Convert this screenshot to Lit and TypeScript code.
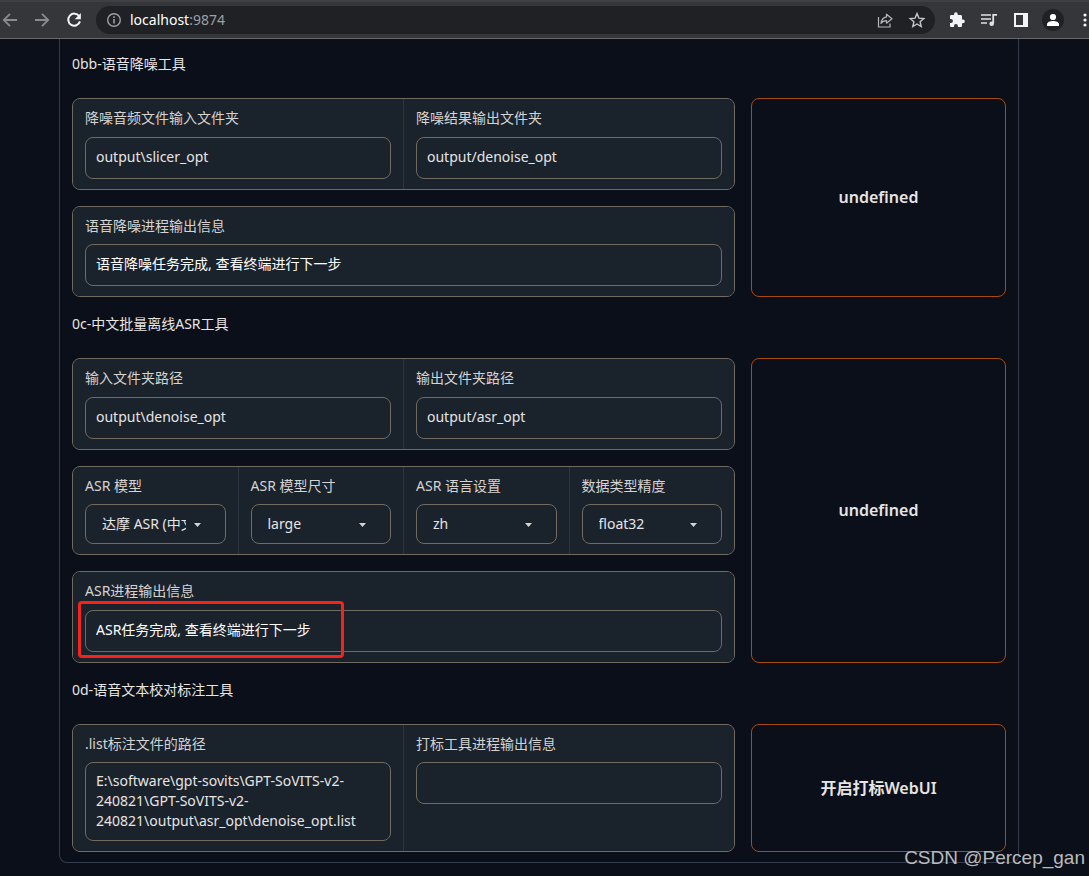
import { LitElement, html, css, svg, nothing } from "lit";
import { customElement, property } from "lit/decorators.js";

const icon = (body: unknown, size = 18) => html`<svg
  width=${size} height=${size} viewBox="0 0 18 18" fill="none" aria-hidden="true">${body}</svg>`;

const icons = {
  back: svg`<path d="M16 9H3M9 2.8 2.8 9 9 15.2" stroke="#8a8b8e" stroke-width="1.8"/>`,
  forward: svg`<path d="M2 9h13M9 2.8 15.2 9 9 15.2" stroke="#8a8b8e" stroke-width="1.8"/>`,
  reload: svg`<path d="M14.2 5.2A6 6 0 1 0 15 10.4" stroke="#f1f3f4" stroke-width="2"/><path d="M15.9 2v6.2H9.7z" fill="#f1f3f4"/>`,
  info: svg`<circle cx="9" cy="9" r="6.3" stroke="#9aa0a6" stroke-width="1.4"/><path d="M9 8v4.4M9 5.2v1.7" stroke="#9aa0a6" stroke-width="1.6"/>`,
  share: svg`<path d="M2.5 6v10h11.500v-3.500" stroke="#b4b6b9" stroke-width="1.200"/><path d="M10.500 3.200 16 7.800l-5.500 4.400V9.700C8 9.700 6.300 10.500 5 12.500c.4-3.600 2-6 5.500-6.600z" stroke="#b4b6b9" stroke-width="1.200" stroke-linejoin="round"/>`,
  star: svg`<path d="m9 2.600 1.900 4.500 4.900.4-3.700 3.200 1.100 4.800L9 13l-4.200 2.500 1.100-4.800-3.700-3.200 4.900-.4z" stroke="#c4c6c9" stroke-width="1.400"/>`,
  puzzle: svg`<path d="M15 8.600h-1V5.400c0-.8-.6-1.400-1.400-1.400H9.700V3a1.800 1.800 0 0 0-3.600 0v1H3.300C2.500 4 2 4.600 2 5.400v2.700h1a1.950 1.950 0 0 1 0 3.900H2v2.700c0 .8.500 1.300 1.300 1.300H6v-1a1.950 1.950 0 0 1 3.900 0v1h2.700c.8 0 1.400-.5 1.400-1.300v-2.500h1a1.800 1.800 0 0 0 0-3.600z" fill="#f1f3f4"/>`,
  music: svg`<path d="M1 4h10M1 8h10M1 12h6" stroke="#dfe1e3" stroke-width="1.700"/><path d="M13.200 12.500V3.900h3.800" stroke="#dfe1e3" stroke-width="1.800"/><circle cx="11.700" cy="12.700" r="2.300" fill="#dfe1e3"/>`,
  panel: svg`<path fill-rule="evenodd" d="M2 2h14v14H2zM4 4v10h7V4z" fill="#f1f3f4"/>`,
  person: svg`<circle cx="9" cy="6" r="3.100" fill="#fff"/><path d="M3 15v-1.600c0-2.100 3.300-3.300 6-3.300s6 1.200 6 3.300V15z" fill="#fff"/>`,
  dots: svg`<circle cx="9" cy="4" r="1.600" fill="#f1f3f4"/><circle cx="9" cy="9" r="1.600" fill="#f1f3f4"/><circle cx="9" cy="14" r="1.600" fill="#f1f3f4"/>`,
};

interface Field {
  id: string;
  label: string;
  value: string;
  kind?: "text" | "select" | "area";
  bright?: boolean;
  marked?: boolean;
}
interface Row {
  compact?: boolean;
  fields: Field[];
}
interface Tool {
  title: string;
  action: string;
  rows: Row[];
}

const tools: Tool[] = [
  {
    title: "0bb-语音降噪工具",
    action: "undefined",
    rows: [
      {
        fields: [
          { id: "denoise-in", label: "降噪音频文件输入文件夹", value: "output\\slicer_opt" },
          { id: "denoise-out", label: "降噪结果输出文件夹", value: "output/denoise_opt" },
        ],
      },
      {
        compact: true,
        fields: [
          { id: "denoise-log", label: "语音降噪进程输出信息", value: "语音降噪任务完成, 查看终端进行下一步", bright: true },
        ],
      },
    ],
  },
  {
    title: "0c-中文批量离线ASR工具",
    action: "undefined",
    rows: [
      {
        fields: [
          { id: "asr-in", label: "输入文件夹路径", value: "output\\denoise_opt" },
          { id: "asr-out", label: "输出文件夹路径", value: "output/asr_opt" },
        ],
      },
      {
        compact: true,
        fields: [
          { id: "asr-model", label: "ASR 模型", value: "达摩 ASR (中文)", kind: "select" },
          { id: "asr-size", label: "ASR 模型尺寸", value: "large", kind: "select" },
          { id: "asr-lang", label: "ASR 语言设置", value: "zh", kind: "select" },
          { id: "asr-precision", label: "数据类型精度", value: "float32", kind: "select" },
        ],
      },
      {
        fields: [
          { id: "asr-log", label: "ASR进程输出信息", value: "ASR任务完成, 查看终端进行下一步", bright: true, marked: true },
        ],
      },
    ],
  },
  {
    title: "0d-语音文本校对标注工具",
    action: "开启打标WebUI",
    rows: [
      {
        compact: true,
        fields: [
          {
            id: "list-path",
            label: ".list标注文件的路径",
            value: "E:\\software\\gpt-sovits\\GPT-SoVITS-v2-240821\\GPT-SoVITS-v2-240821\\output\\asr_opt\\denoise_opt.list",
            kind: "area",
          },
          { id: "label-log", label: "打标工具进程输出信息", value: "" },
        ],
      },
    ],
  },
];

@customElement("browser-bar")
class BrowserBar extends LitElement {
  static styles = css`
    :host {
      display: flex;
      align-items: center;
      box-sizing: border-box;
      height: 39px;
      overflow: hidden;
      background: #35363a;
      border-top: 2px solid #3f4045;
      border-bottom: 1px solid #67686b;
    }
    button {
      display: flex;
      flex: none;
      align-items: center;
      justify-content: center;
      width: 32px;
      height: 32px;
      padding: 0;
      border: 0;
      background: none;
    }
    .nav {
      display: flex;
      flex: none;
      margin-left: -6px;
      margin-right: 6px;
    }
    .address {
      display: flex;
      flex: 1;
      align-items: center;
      min-width: 0;
      height: 28px;
      padding: 0 2px 0 9px;
      border-radius: 14px;
      background: #202124;
    }
    .url {
      flex: 1;
      margin-left: 7px;
      font-size: 14px;
      line-height: 20px;
      color: #9aa0a6;
    }
    .host {
      color: #fff;
    }
    .tools {
      display: flex;
      flex: none;
      margin-left: 6px;
      margin-right: -12px;
    }
    .avatar {
      display: flex;
      align-items: center;
      justify-content: center;
      width: 22px;
      height: 22px;
      border-radius: 50%;
      background: #202124;
    }
  `;

  render() {
    return html`
      <div class="nav">
        <button aria-label="后退">${icon(icons.back)}</button>
        <button aria-label="前进">${icon(icons.forward)}</button>
        <button aria-label="重新加载">${icon(icons.reload)}</button>
      </div>
      <div class="address">
        ${icon(icons.info)}
        <span class="url"><span class="host">localhost</span>:9874</span>
        <button aria-label="分享">${icon(icons.share)}</button>
        <button aria-label="收藏">${icon(icons.star)}</button>
      </div>
      <div class="tools">
        <button aria-label="扩展程序">${icon(icons.puzzle)}</button>
        <button aria-label="媒体控制">${icon(icons.music)}</button>
        <button aria-label="侧边栏">${icon(icons.panel)}</button>
        <button aria-label="用户"><span class="avatar">${icon(icons.person)}</span></button>
        <button aria-label="菜单">${icon(icons.dots)}</button>
      </div>
    `;
  }
}

@customElement("tool-section")
class ToolSection extends LitElement {
  @property({ attribute: false }) tool!: Tool;

  static styles = css`
    :host {
      display: block;
      --line: #716a60;
      --block: #1a222c;
    }
    * {
      box-sizing: border-box;
    }
    .title {
      margin: 0;
      padding: 17px 0 24px;
      font-size: 14px;
      font-weight: 400;
      line-height: 20px;
      color: #e7e5e4;
    }
    .body {
      display: grid;
      grid-template-columns: 13fr 5fr;
      gap: 16px;
    }
    .rows {
      display: flex;
      flex-direction: column;
      gap: 16px;
      min-width: 0;
    }
    .row {
      display: grid;
      grid-auto-flow: column;
      grid-auto-columns: minmax(0, 1fr);
      gap: 1px;
      overflow: hidden;
      border: 1px solid var(--line);
      border-radius: 8px;
      background: #2e3540;
    }
    .field {
      display: flex;
      flex-direction: column;
      gap: 10px;
      padding: 10px 12px;
      background: var(--block);
    }
    .compact .field {
      gap: 9px;
    }
    label {
      font-size: 14px;
      line-height: 18px;
      color: #d6d3d1;
    }
    .control {
      position: relative;
      display: flex;
    }
    input,
    textarea,
    select {
      display: block;
      width: 100%;
      margin: 0;
      border: 1px solid var(--line);
      border-radius: 8px;
      outline: 0;
      background: var(--block);
      font: inherit;
      font-size: 14px;
      line-height: 20px;
      color: #e7e5e4;
    }
    input {
      height: 42px;
      padding: 0 10px 4px;
    }
    .bright {
      color: #fff;
    }
    textarea {
      height: 79px;
      padding: 8px 10px;
      overflow: hidden;
      resize: none;
    }
    select {
      height: 40px;
      padding: 0 39px 0 16px;
      appearance: none;
    }
    .caret {
      position: absolute;
      top: 19px;
      right: 25px;
      pointer-events: none;
    }
    .mark {
      position: absolute;
      top: -9px;
      left: -7px;
      width: 266px;
      height: 57px;
      border: 3px solid #f9221a;
      border-radius: 4px;
      pointer-events: none;
    }
    .action {
      padding: 0 6px 2px;
      border: 1px solid #a54d0d;
      border-radius: 8px;
      background: transparent;
      font: inherit;
      font-size: 16px;
      font-weight: 600;
      color: #e7e5e4;
    }
  `;

  private control(f: Field) {
    if (f.kind === "select") {
      return html`<select id=${f.id}><option>${f.value}</option></select>
        <svg class="caret" width="7" height="4" viewBox="0 0 7 4" aria-hidden="true">
          <path d="M0 0h7L3.500 4z" fill="#d6d3d1" />
        </svg>`;
    }
    if (f.kind === "area") {
      return html`<textarea id=${f.id} spellcheck="false" .value=${f.value}></textarea>`;
    }
    return html`<input id=${f.id} type="text" spellcheck="false" class=${f.bright ? "bright" : ""} .value=${f.value} />`;
  }

  render() {
    return html`
      <h2 class="title">${this.tool.title}</h2>
      <div class="body">
        <div class="rows">
          ${this.tool.rows.map(
            (r) => html`<div class="row ${r.compact ? "compact" : ""}">
              ${r.fields.map(
                (f) => html`<div class="field">
                  <label for=${f.id}>${f.label}</label>
                  <div class="control">
                    ${this.control(f)} ${f.marked ? html`<span class="mark"></span>` : nothing}
                  </div>
                </div>`
              )}
            </div>`
          )}
        </div>
        <button class="action">${this.tool.action}</button>
      </div>
    `;
  }
}

@customElement("app-root")
class AppRoot extends LitElement {
  static styles = css`
    :host {
      position: relative;
      display: flex;
      flex-direction: column;
      box-sizing: border-box;
      min-height: 100vh;
      overflow: hidden;
      background: #0b0f19;
      font-family: "Noto Sans", "Noto Sans CJK SC", sans-serif;
    }
    main {
      margin: 0 70px 13px 59px;
      padding: 0 12px 10px;
      border: 1px solid #343b4d;
      border-top: 0;
      border-radius: 0 0 8px 8px;
    }
    tool-section:first-child {
      margin-top: -2px;
    }
    .watermark {
      position: absolute;
      right: 4px;
      bottom: 6px;
      font-family: "Liberation Sans", sans-serif;
      font-size: 19px;
      line-height: 24px;
      color: #b9bbbe;
    }
  `;

  render() {
    return html`
      <browser-bar></browser-bar>
      <main>${tools.map((t) => html`<tool-section .tool=${t}></tool-section>`)}</main>
      <span class="watermark">CSDN @Percep_gan</span>
    `;
  }
}
